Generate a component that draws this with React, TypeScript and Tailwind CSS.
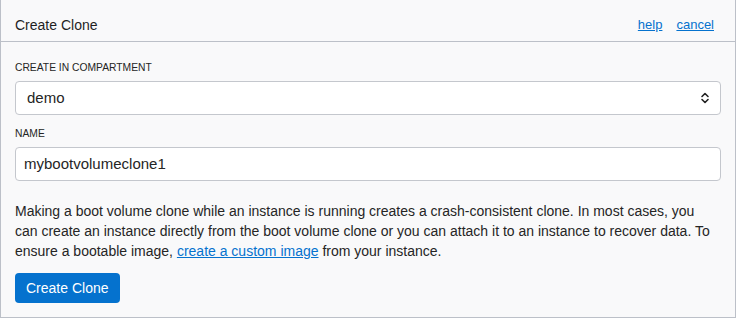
import React from "react";

function Chevrons() {
  return (
    <svg width="10" height="14" viewBox="0 0 10 14" fill="none" stroke="#222" strokeWidth="1.6" strokeLinecap="round" strokeLinejoin="round">
      <path d="M2 5.5 L5 2.5 L8 5.5" />
      <path d="M2 8.5 L5 11.5 L8 8.5" />
    </svg>
  );
}

export default function App() {
  return (
    <div className="h-[318px] w-[736px] overflow-hidden bg-white font-['Liberation_Sans',Arial,sans-serif] text-[#333]">
      <div className="flex h-full flex-col border-x border-b border-[#bcc0c8] bg-[#f9f9fa]">
        <header className="flex h-[42px] items-center justify-between border-b border-[#bcc0c8] pl-[14px] pr-[21px] pt-[9px]">
          <h1 className="text-[14px] text-[#1f1f1f]">Create Clone</h1>
          <nav className="flex gap-[14px] text-[13px]">
            <a href="#" className="text-[#0572ce] underline">help</a>
            <a href="#" className="text-[#0572ce] underline">cancel</a>
          </nav>
        </header>

        <div className="px-[14px] pt-[18px]">
          <label className="block text-[10.3px] leading-4 text-[#252525]">CREATE IN COMPARTMENT</label>
          <div className="mt-[5px] flex h-[34px] items-center justify-between rounded border border-[#c4c7cd] bg-white pl-[11px] pr-[10px]">
            <span className="text-[15px] text-[#252525]">demo</span>
            <Chevrons />
          </div>

          <label className="mt-[11px] block text-[10.3px] leading-4 text-[#252525]">NAME</label>
          <div className="mt-[5px] flex h-[34px] items-center rounded border border-[#c4c7cd] bg-white pl-[8px]">
            <span className="text-[15px] text-[#252525]">mybootvolumeclone1</span>
          </div>

          <p className="mt-[20px] whitespace-nowrap text-[14px] leading-5 text-[#252525]">
            Making a boot volume clone while an instance is running creates a crash-consistent clone. In most cases, you
            <br />
            can create an instance directly from the boot volume clone or you can attach it to an instance to recover data. To
            <br />
            ensure a bootable image, <a href="#" className="text-[#0572ce] underline">create a custom image</a> from your instance.
          </p>

          <button className="mt-[12px] h-[30px] rounded bg-[#0572ce] px-[11px] text-[14px] text-white">Create Clone</button>
        </div>
      </div>
    </div>
  );
}
